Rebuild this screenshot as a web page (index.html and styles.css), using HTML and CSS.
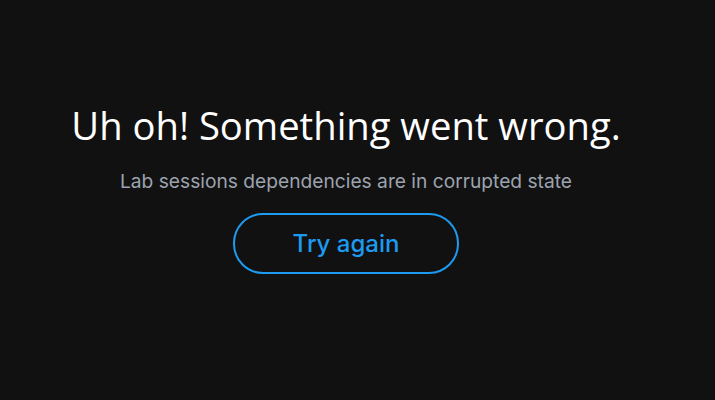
FILE: index.html
```html
<!DOCTYPE html>
<html lang="en">
<head>
<meta charset="utf-8">
<title>Error</title>
<link rel="stylesheet" href="styles.css">
</head>
<body>
<main class="error">
  <h1 class="error-title">Uh oh! Something went wrong.</h1>
  <p class="error-text">Lab sessions dependencies are in corrupted state</p>
  <button class="error-btn" type="button">Try again</button>
</main>
</body>
</html>
```
FILE: styles.css
```css
html, body {
  margin: 0;
  padding: 0;
  background: #111111;
  height: 100%;
}
.error {
  display: flex;
  flex-direction: column;
  align-items: center;
  box-sizing: border-box;
  height: 400px;
  padding: 100px 23px 0 0;
}
.error-title {
  margin: 0;
  font-family: "Open Sans", sans-serif;
  font-weight: 400;
  font-size: 38.2px;
  line-height: 50px;
  color: #ffffff;
}
.error-text {
  margin: 18px 0 0;
  font-family: Inter, sans-serif;
  font-size: 19.2px;
  line-height: 26px;
  color: #9ca3af;
}
.error-btn {
  margin-top: 19px;
  box-sizing: border-box;
  width: 226px;
  height: 61px;
  border: 2px solid #1d9bf0;
  border-radius: 30px;
  background: transparent;
  font-family: Inter, sans-serif;
  font-weight: 500;
  font-size: 24px;
  color: #1d9bf0;
  cursor: pointer;
}
```
